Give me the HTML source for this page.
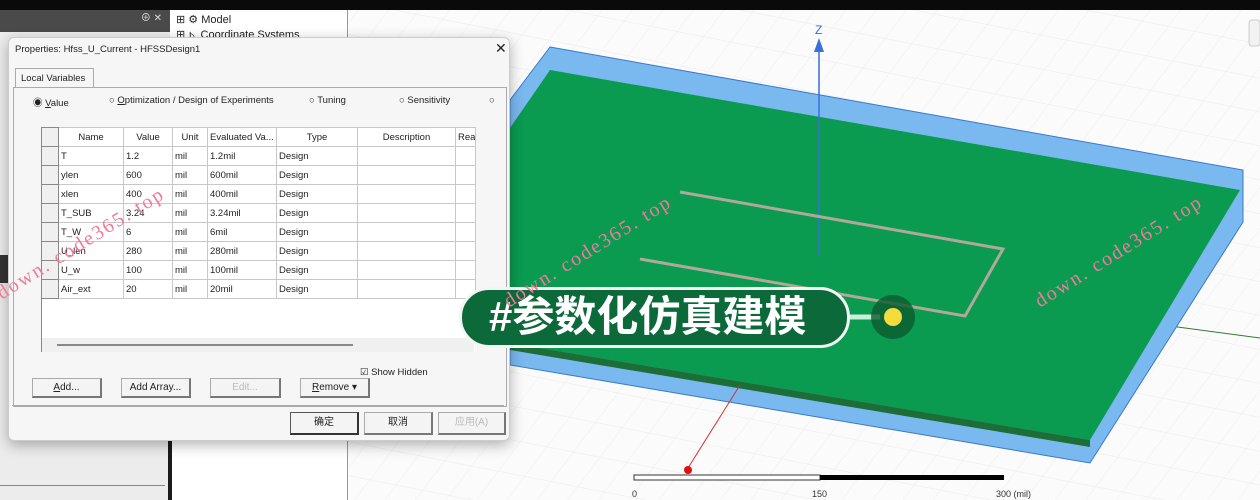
<!DOCTYPE html>
<html><head><meta charset="utf-8"><style>
*{margin:0;padding:0;box-sizing:border-box}
body{width:1260px;height:500px;position:relative;overflow:hidden;background:#fff;font-family:"Liberation Sans","Noto Sans CJK SC",sans-serif;font-size:10px;color:#222}
.abs{position:absolute}
table{border-collapse:collapse;position:absolute;left:41px;top:127px;width:434px;table-layout:fixed;font-size:9.5px}
td,th{border:1px solid #c8c8c8;height:19px;padding:0 2px;text-align:left;font-weight:normal;white-space:nowrap;overflow:hidden}
th{text-align:center;background:#fff}
td:first-child,th:first-child{background:#f0f0f0;border-color:#888}
.btn{position:absolute;height:20px;border:1px solid #aaa;border-right:2px solid #777;border-bottom:2px solid #777;background:#f4f4f4;text-align:center;line-height:17px;font-size:10px}
.wm{position:absolute;color:#f07a9a;font-family:"Liberation Serif",serif;font-size:20px;transform:rotate(-32deg);transform-origin:left bottom;white-space:nowrap;letter-spacing:2px;z-index:20}
</style></head><body>
<svg class="abs" style="left:0;top:0" width="1260" height="500">
<defs><pattern id="g" width="30" height="30" patternUnits="userSpaceOnUse" patternTransform="skewX(-30) rotate(10)"><path d="M0 0H30M0 0V30" stroke="#ececec" stroke-width="1" fill="none"/></pattern></defs>
<rect x="348" y="0" width="912" height="500" fill="#fbfbfb"/>
<rect x="348" y="0" width="912" height="500" fill="url(#g)"/>
<line x1="1140" y1="322" x2="1260" y2="338" stroke="#2e7d32" stroke-width="1"/>
<polygon points="550,47 1243,170 1243,222 1090,463 510,365 510,100" fill="#7ab8f0" stroke="#3a78c8"/>
<polygon points="550,70 1240,190 1090,440 510,343 510,128" fill="#0a9a50"/>
<polygon points="510,343 1090,440 1090,447 510,350" fill="#1c6e36"/>
<line x1="819" y1="48" x2="819" y2="255" stroke="#3a6ed8" stroke-width="1.5"/>
<polygon points="814,52 819,38 824,52" fill="#3a6ed8"/>
<text x="815" y="34" font-size="12" fill="#3a6ed8" font-family="Liberation Sans">Z</text>
<polyline points="680,192 1003,249 965,316 640,259" fill="none" stroke="#b0a898" stroke-width="3"/>
<line x1="740" y1="385" x2="688" y2="468" stroke="#d03030" stroke-width="1"/>
<circle cx="688" cy="470" r="4" fill="#e01010"/>
<rect x="634" y="475" width="186" height="5" fill="#fff" stroke="#333"/>
<rect x="820" y="475" width="184" height="5" fill="#000"/>
<g font-size="9" fill="#333" font-family="Liberation Sans"><text x="632" y="497">0</text><text x="812" y="497">150</text><text x="996" y="497">300 (mil)</text></g>
<line x1="848" y1="317" x2="880" y2="317" stroke="#c8f0d8" stroke-width="5"/>
<circle cx="893" cy="317" r="22" fill="#0c5a30" opacity=".8"/>
<circle cx="893" cy="317" r="9" fill="#f4dc3c"/>
<rect x="1249" y="20" width="11" height="26" rx="3" fill="#f2f2f2" stroke="#ccc"/>
</svg>
<div class="abs" style="left:0;top:0;width:1260px;height:10px;background:#0a0a0a"></div>
<div class="abs" style="left:0;top:10px;width:170px;height:490px;background:#ececec"></div>
<div class="abs" style="left:0;top:10px;width:170px;height:22px;background:#4a4a4a;color:#ddd;font-size:10px;text-align:right;padding-right:8px;line-height:18px">⊕ ✕</div>
<div class="abs" style="left:0;top:255px;width:10px;height:28px;background:#333"></div>
<div class="abs" style="left:0;top:485px;width:165px;height:1px;background:#888"></div>
<div class="abs" style="left:168px;top:440px;width:7px;height:60px;background:#1a1a1a"></div>
<div class="abs" style="left:172px;top:10px;width:176px;height:490px;background:#fff;border-right:1px solid #999;font-size:11px;padding:3px 4px;line-height:15px">⊞ ⚙ Model<br>⊞ ⊾ Coordinate Systems</div>
<div class="abs" style="left:8px;top:37px;width:502px;height:404px;background:#f6f6f6;border:1px solid #ccc;border-radius:6px;box-shadow:0 4px 14px rgba(0,0,0,.3)">
<div class="abs" style="left:6px;top:6px;font-size:9.5px">Properties: Hfss_U_Current - HFSSDesign1</div>
<div class="abs" style="left:486px;top:2px;font-size:14px">✕</div>
<div class="abs" style="left:6px;top:30px;width:79px;height:20px;border:1px solid #aaa;border-bottom:none;background:#f6f6f6;font-size:9.5px;padding:4px 0 0 5px">Local Variables</div>
<div class="abs" style="left:4px;top:49px;width:494px;height:320px;border:1px solid #aaa"></div>
<div class="abs" style="left:24px;top:57px;font-size:9.5px">◉ <u>V</u>alue</div>
<div class="abs" style="left:100px;top:57px;font-size:9.5px">○ <u>O</u>ptimization / Design of Experiments</div>
<div class="abs" style="left:300px;top:57px;font-size:9.5px">○ Tuning</div>
<div class="abs" style="left:390px;top:57px;font-size:9.5px">○ Sensitivity</div>
<div class="abs" style="left:480px;top:57px;font-size:9.5px">○</div>
</div>
<div class="abs" style="left:41px;top:127px;width:434px;height:225px;background:#fff;border-left:1px solid #888"></div>
<table>
<colgroup><col style="width:17px"><col style="width:65px"><col style="width:49px"><col style="width:35px"><col style="width:69px"><col style="width:81px"><col style="width:98px"><col style="width:20px"></colgroup>
<tr><th></th><th>Name</th><th>Value</th><th>Unit</th><th style="text-align:left">Evaluated Va...</th><th>Type</th><th>Description</th><th>Rea</th></tr>
<tr><td></td><td>T</td><td>1.2</td><td>mil</td><td>1.2mil</td><td>Design</td><td></td><td></td></tr>
<tr><td></td><td>ylen</td><td>600</td><td>mil</td><td>600mil</td><td>Design</td><td></td><td></td></tr>
<tr><td></td><td>xlen</td><td>400</td><td>mil</td><td>400mil</td><td>Design</td><td></td><td></td></tr>
<tr><td></td><td>T_SUB</td><td>3.24</td><td>mil</td><td>3.24mil</td><td>Design</td><td></td><td></td></tr>
<tr><td></td><td>T_W</td><td>6</td><td>mil</td><td>6mil</td><td>Design</td><td></td><td></td></tr>
<tr><td></td><td>U_len</td><td>280</td><td>mil</td><td>280mil</td><td>Design</td><td></td><td></td></tr>
<tr><td></td><td>U_w</td><td>100</td><td>mil</td><td>100mil</td><td>Design</td><td></td><td></td></tr>
<tr><td></td><td>Air_ext</td><td>20</td><td>mil</td><td>20mil</td><td>Design</td><td></td><td></td></tr>
</table>
<div class="abs" style="left:42px;top:338px;width:432px;height:14px;background:#f0f0f0"></div>
<div class="abs" style="left:57px;top:344px;width:296px;height:2px;background:#888"></div>
<div class="abs" style="left:360px;top:367px;font-size:9.5px">☑ Show Hidden</div>
<div class="btn" style="left:32px;top:378px;width:70px"><u>A</u>dd...</div>
<div class="btn" style="left:121px;top:378px;width:70px">Add Array...</div>
<div class="btn" style="left:210px;top:378px;width:71px;color:#bbb">Edit...</div>
<div class="btn" style="left:300px;top:378px;width:70px"><u>R</u>emove ▾</div>
<div class="abs" style="left:12px;top:405px;width:492px;height:1px;background:#aaa"></div>
<div class="btn" style="left:290px;top:412px;width:69px;height:23px;border:1px solid #555;border-right:2px solid #333;border-bottom:2px solid #333;line-height:20px">确定</div>
<div class="btn" style="left:364px;top:412px;width:69px;height:23px;line-height:20px">取消</div>
<div class="btn" style="left:438px;top:412px;width:68px;height:23px;line-height:20px;color:#bbb">应用(A)</div>
<div class="abs" style="left:459px;top:287px;width:391px;height:61px;border:3px solid #f4f4f4;border-radius:30px;background:#0c6a3a;color:#fff;font-size:42px;line-height:54px;padding-left:27px;font-weight:bold;white-space:nowrap;z-index:10;overflow:hidden;font-family:'Liberation Sans','Noto Sans CJK SC',sans-serif">#参数化仿真建模</div>
<div class="wm" style="left:5px;top:282px">down. code365. top</div>
<div class="wm" style="left:512px;top:290px">down. code365. top</div>
<div class="wm" style="left:1043px;top:290px">down. code365. top</div>
</body></html>
